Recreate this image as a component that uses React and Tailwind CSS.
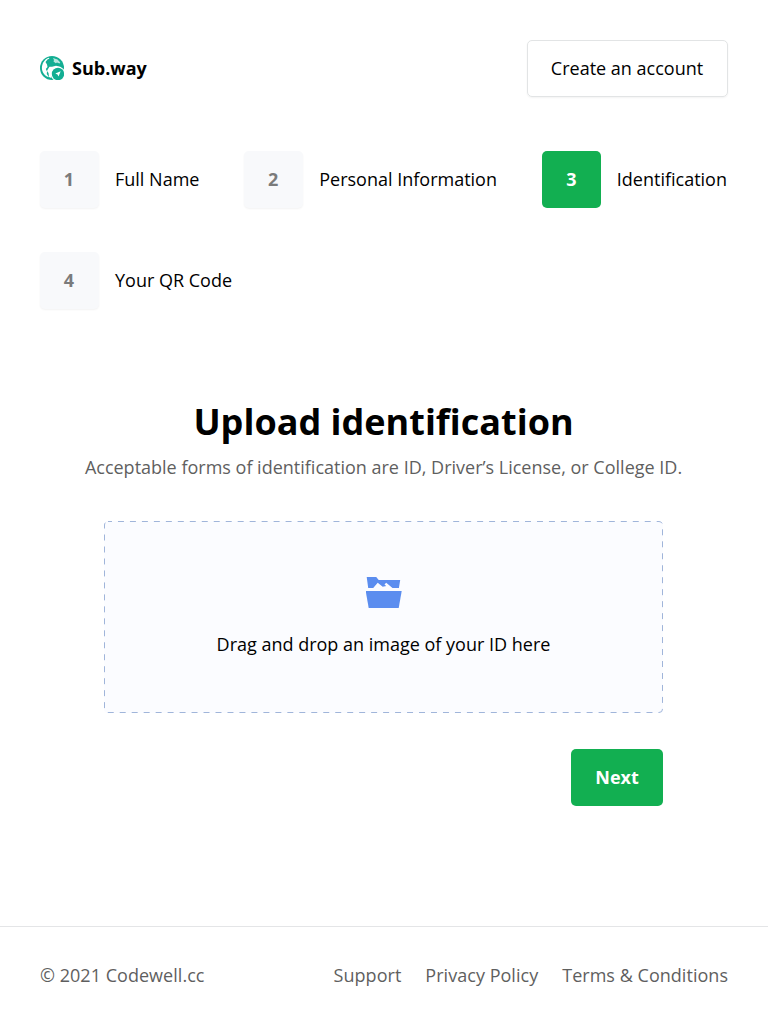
const steps = ['Full Name', 'Personal Information', 'Identification', 'Your QR Code'];
const ACTIVE_STEP = 2;

function Logo() {
  return (
    <svg width="24" height="24" viewBox="0 0 24 24" fill="none" className="mb-0.5 shrink-0">
      <circle cx="12" cy="12" r="12" fill="#13ae93" />
      <path d="M8.500 1.700 9.500 2.500 7.500 3.500 5.500 6 7 8.500 7.500 11 5.800 13 7 15.500 6.800 18 9 21.300C4.800 20 1.900 16.300 1.900 12c0-4.800 2.800-8.700 6.600-10.300Z" fill="#fff" />
      <path d="M13 1.900 17.500 3.500 20.300 6.500 19.500 7.500 17 6.500 15.800 7.200 13.500 5.500 14 4Z" fill="#fff" opacity=".7" />
      <path d="M8 13 9.500 10.800 12 10.700 16 9.800 20.300 10.800 22 12.600 14 13 11 18.500 11.300 22 9 21 8.500 17 7 15Z" fill="#fff" />
      <circle cx="18" cy="18" r="7.300" fill="#fff" />
      <circle cx="18" cy="18" r="6.200" fill="#13ae93" />
      <path d="m20.700 15.200-2.200 5.400-1-2.200-2.200-1Z" fill="#fff" />
    </svg>
  );
}

function FolderIcon() {
  return (
    <svg width="36" height="32" viewBox="0.3 0 36 32" fill="#5b8def">
      <path d="M1 0H10.500L13 3H34.500L33.200 11H26.800L20.500 5.800L18.800 7.500L20.500 9L17 9.800L12 5.700L7.500 11H2.500Z" />
      <path d="M0 14H36L33 31H3Z" />
    </svg>
  );
}

export default function App() {
  return (
    <div className="flex min-h-screen flex-col bg-white font-['Open_Sans',sans-serif] text-[18px] leading-[25px] text-black">
      <header className="flex items-center justify-between px-10 pt-10">
        <a className="flex items-center gap-2 font-bold">
          <Logo />
          <span>Sub.way</span>
        </a>
        <button className="flex h-[57px] w-[201px] items-center justify-center rounded-[5px] border border-[#e2e4e5] pr-px shadow-[0_1px_2px_rgba(0,0,0,0.05)]">
          Create an account
        </button>
      </header>

      <ol className="flex flex-wrap gap-x-[44.8px] gap-y-11 pt-[54px] pr-9 pl-10">
        {steps.map((label, i) => (
          <li key={label} className="flex items-center gap-4 whitespace-nowrap">
            <span
              className={
                'flex h-[57px] w-[59px] items-center justify-center rounded-[5px] font-bold ' +
                (i === ACTIVE_STEP
                  ? 'bg-[#12af51] text-white'
                  : 'bg-[#f8f9fb] pr-px text-[#7b7b7b] shadow-[0_1px_2px_rgba(0,0,0,0.05)]')
              }
            >
              {i + 1}
            </span>
            <span>{label}</span>
          </li>
        ))}
      </ol>

      <main className="mx-auto box-content flex w-[559px] flex-col items-center pt-[87px] pr-px">
        <h1 className="text-[36px] leading-[52px] font-bold">Upload identification</h1>
        <p className="mt-[7px] whitespace-nowrap text-[#5f5f5f]">
          Acceptable forms of identification are ID, Driver’s License, or College ID.
        </p>
        <div className="relative mt-[41px] flex h-[192px] w-[559px] flex-col items-center rounded-[4px] bg-[#fbfcff] pt-14">
          <svg className="absolute inset-0" width="559" height="192" fill="none">
            <rect
              x="0.5"
              y="0.5"
              width="558"
              height="191"
              rx="3.5"
              stroke="#a0b5da"
              strokeDasharray="5.986"
              strokeDashoffset="2"
            />
          </svg>
          <FolderIcon />
          <p className="mt-[23px]">Drag and drop an image of your ID here</p>
        </div>
        <div className="mt-9 flex w-[559px] justify-end">
          <button className="h-[57px] w-[92px] rounded-[5px] bg-[#12af51] font-bold text-white">Next</button>
        </div>
      </main>

      <footer className="mt-auto flex h-[98px] items-center justify-between border-t border-[#e4e5e7] px-10 tracking-[0.03px] text-[#5f5f5f]">
        <span>© 2021 Codewell.cc</span>
        <nav className="flex gap-6">
          <a>Support</a>
          <a>Privacy Policy</a>
          <a>Terms &amp; Conditions</a>
        </nav>
      </footer>
    </div>
  );
}
